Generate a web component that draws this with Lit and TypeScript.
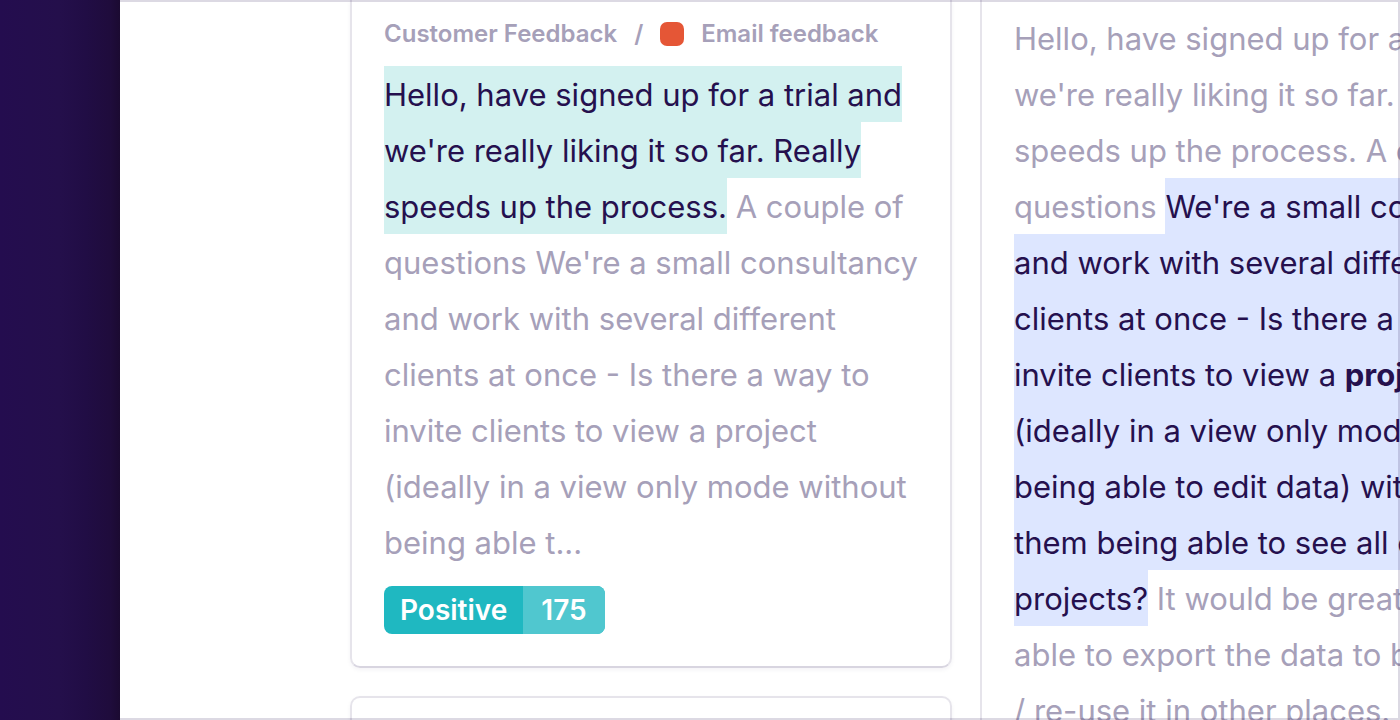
import { LitElement, html, css } from "lit";
import { customElement } from "lit/decorators.js";

@customElement("app-root")
export class AppRoot extends LitElement {
  static styles = css`
    :host {
      display: flex;
      height: 100vh;
      overflow: hidden;
      background: #fff;
      color: #a6a0b9;
      font-family: Inter, "Liberation Sans", sans-serif;
    }
    * {
      box-sizing: border-box;
    }
    .rail {
      flex: 0 0 120px;
      background: linear-gradient(90deg, #240d4f 0, #240f4b 60px, #210d45 85px, #1f0c3c 110px, #1b0a31 120px);
    }
    .board {
      position: relative;
      flex: 1;
      min-width: 0;
      display: flex;
      gap: 28px;
      padding-left: 230px;
      overflow: hidden;
    }
    .board::after {
      content: "";
      position: absolute;
      inset: 0;
      border: 2px solid rgba(37, 16, 78, 0.16);
      border-left: 0;
      pointer-events: none;
    }
    .list {
      flex: 0 0 602px;
      min-width: 0;
      display: flex;
      flex-direction: column;
      gap: 28px;
    }
    .card {
      flex: none;
      padding: 18px 32px 32px;
      border: 2px solid #e6e4eb;
      border-bottom-color: #d8d5e0;
      border-radius: 10px;
      box-shadow: 0 2px 4px rgba(37, 16, 78, 0.05);
    }
    .card.first {
      border-top: 0;
      border-top-left-radius: 0;
      border-top-right-radius: 0;
    }
    .card.next {
      min-height: 200px;
    }
    .crumbs {
      display: flex;
      align-items: center;
      gap: 17px;
      height: 32px;
      margin-bottom: 16px;
      font-size: 24px;
      line-height: 28px;
      font-weight: 600;
      white-space: nowrap;
    }
    .swatch {
      width: 24px;
      height: 24px;
      border-radius: 7px;
      background: #e55636;
    }
    .text {
      font-size: 31px;
      white-space: nowrap;
    }
    .line,
    mark {
      height: 56px;
      line-height: 57px;
    }
    mark {
      display: inline-block;
      color: #25104e;
      background: #d3f1f0;
    }
    .detail mark {
      background: #dde6ff;
    }
    .tag {
      display: inline-flex;
      margin-top: 16px;
      border-radius: 8px;
      overflow: hidden;
      font-size: 28px;
      font-weight: 600;
      line-height: 48px;
      color: #fff;
      background: #1fb8c1;
      vertical-align: top;
    }
    .tag span {
      padding: 0 16px;
    }
    .tag .count {
      padding: 0 18px;
      background: #50c7cf;
    }
    .detail {
      flex: none;
      padding: 10px 32px;
      border-left: 2px solid #e6e4eb;
    }
  `;

  render() {
    return html`
      <aside class="rail"></aside>
      <main class="board">
        <section class="list">
          <article class="card first">
            <nav class="crumbs">
              <span>Customer Feedback</span><span>/</span><i class="swatch"></i><span>Email feedback</span>
            </nav>
            <div class="text">
              <div class="line"><mark>Hello, have signed up for a trial and</mark></div>
              <div class="line"><mark>we're really liking it so far. Really</mark></div>
              <div class="line"><mark>speeds up the process.</mark> A couple of</div>
              <div class="line">questions We're a small consultancy</div>
              <div class="line">and work with several different</div>
              <div class="line">clients at once - Is there a way to</div>
              <div class="line">invite clients to view a project</div>
              <div class="line">(ideally in a view only mode without</div>
              <div class="line">being able t...</div>
            </div>
            <div class="tag"><span>Positive</span><span class="count">175</span></div>
          </article>
          <article class="card next"></article>
        </section>
        <section class="detail">
          <div class="text">
            <div class="line">Hello, have signed up for a trial and</div>
            <div class="line">we're really liking it so far. Really</div>
            <div class="line">speeds up the process. A couple of</div>
            <div class="line">questions <mark>We're a small consultancy</mark></div>
            <div class="line"><mark>and work with several different</mark></div>
            <div class="line"><mark>clients at once - Is there a way to</mark></div>
            <div class="line"><mark>invite clients to view a <b>project</b></mark></div>
            <div class="line"><mark>(ideally in a view only mode without</mark></div>
            <div class="line"><mark>being able to edit data) without</mark></div>
            <div class="line"><mark>them being able to see all of our</mark></div>
            <div class="line"><mark>projects?</mark> It would be great to be</div>
            <div class="line">able to export the data to backup</div>
            <div class="line">/ re-use it in other places. I</div>
          </div>
        </section>
      </main>
    `;
  }
}
